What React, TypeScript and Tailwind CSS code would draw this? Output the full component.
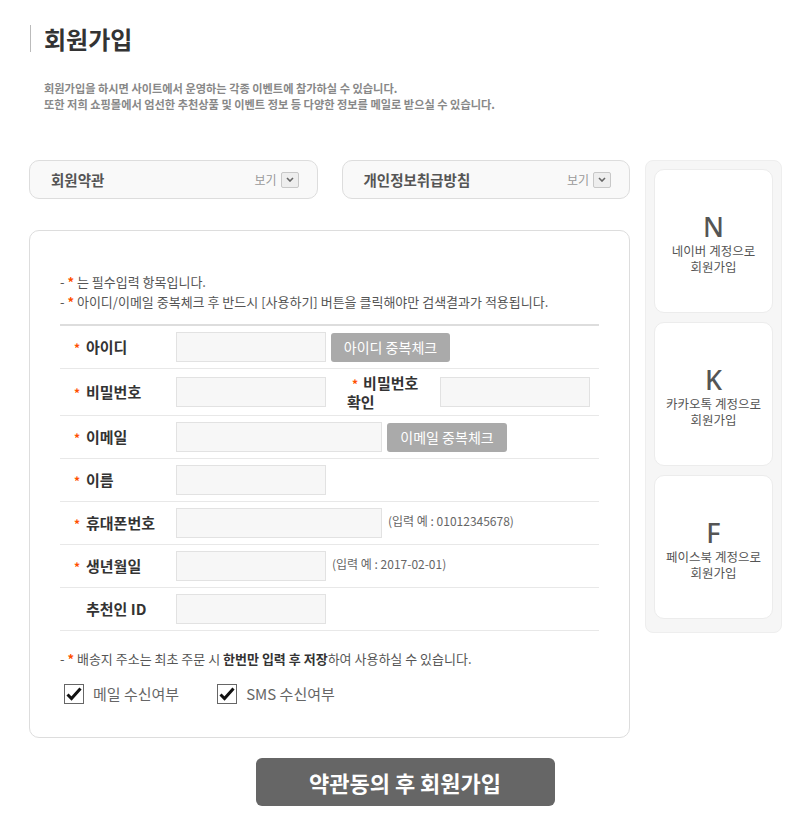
import { ReactNode } from 'react'

const FONT = "font-['Noto_Sans_CJK_KR','Noto_Sans',sans-serif]"

function Star() {
  return <span className="text-[#ff4e00] mr-[5px] text-[12px] font-bold">*</span>
}

function Chevron() {
  return (
    <span className="w-[18px] h-[16px] border border-[#c8c8c8] bg-[#eeeeee] rounded-[2px] flex items-center justify-center">
      <svg width="8" height="5" viewBox="0 0 8 5">
        <path d="M1 1 L4 4 L7 1" fill="none" stroke="#666" strokeWidth="1.6" />
      </svg>
    </span>
  )
}

function Accordion({ title }: { title: string }) {
  return (
    <div className="w-[289px] h-[39px] border border-[#dddddd] bg-[#f9f9f9] rounded-[10px] flex items-center pl-[21px] pr-[18px]">
      <span className="text-[14.5px] font-bold text-[#555]">{title}</span>
      <span className="ml-auto text-[12px] text-[#999] mr-[4px]">보기</span>
      <Chevron />
    </div>
  )
}

function Input({ w }: { w: string }) {
  return <div className={`${w} h-[30px] bg-[#f7f7f7] border border-[#e2e2e2]`} />
}

function CheckBtn({ label, w }: { label: string; w: string }) {
  return (
    <button className={`${w} h-[29px] bg-[#aaaaaa] text-white text-[14px] rounded-[3px] ml-[5px]`}>{label}</button>
  )
}

function Row({ label, required = true, children, tall = false }: { label: ReactNode; required?: boolean; children: ReactNode; tall?: boolean }) {
  return (
    <div className={`flex items-center border-b border-[#e8e8e8] ${tall ? 'h-[47px]' : 'h-[43px]'}`}>
      <div className="w-[116px] pl-[14px] flex items-center text-[15px] font-bold text-[#333]">
        <span className="w-[12px]">{required && <Star />}</span>
        {label}
      </div>
      {children}
    </div>
  )
}

function Hint({ text }: { text: string }) {
  return <span className="self-start mt-[10px] ml-[6px] text-[12px] text-[#666]">{text}</span>
}

function Checkbox({ label }: { label: string }) {
  return (
    <label className="flex items-center gap-[9px] text-[15px] text-[#666]">
      <span className="w-[20px] h-[20px] border border-[#666] bg-white flex items-center justify-center">
        <svg width="16" height="14" viewBox="0 0 16 14">
          <path d="M1.5 7.5 L5.5 11.5 L14.5 1.5" fill="none" stroke="#111" strokeWidth="3" />
        </svg>
      </span>
      {label}
    </label>
  )
}

function SocialCard({ letter, name }: { letter: string; name: string }) {
  return (
    <div className="h-[144px] bg-white border border-[#ececec] rounded-[10px] flex flex-col items-center justify-center pt-[4px]">
      <span className="text-[27px] leading-[30px] font-medium text-[#555] font-['Noto_Sans',sans-serif]">{letter}</span>
      <span className="mt-[1px] text-[12.5px] leading-[16px] text-[#555] text-center">{name} 계정으로<br />회원가입</span>
    </div>
  )
}

export default function App() {
  return (
    <div className={`${FONT} w-[806px] min-h-[820px] bg-white pl-[29px] pt-[25px]`}>
      <div className="ml-[1px] border-l border-[#bbb] h-[27px] flex items-center pl-[13px]">
        <h1 className="text-[24px] font-bold text-[#333] leading-none">회원가입</h1>
      </div>
      <div className="mt-[28px] pl-[15px] text-[11.2px] leading-[16px] font-bold text-[#888]">
        <p>회원가입을 하시면 사이트에서 운영하는 각종 이벤트에 참가하실 수 있습니다.</p>
        <p>또한 저희 쇼핑몰에서 엄선한 추천상품 및 이벤트 정보 등 다양한 정보를 메일로 받으실 수 있습니다.</p>
      </div>

      <div className="mt-[48px] flex gap-[15px]">
        <div className="w-[601px]">
          <div className="flex gap-[24px]">
            <Accordion title="회원약관" />
            <Accordion title="개인정보취급방침" />
          </div>

          <div className="mt-[31px] h-[508px] border border-[#dddddd] rounded-[10px] px-[30px] pt-[41px]">
            <div className="text-[13px] leading-[20px] text-[#555]">
              <p>- <span className="text-[#ff4e00] font-bold">*</span> 는 필수입력 항목입니다.</p>
              <p>- <span className="text-[#ff4e00] font-bold">*</span> 아이디/이메일 중복체크 후 반드시 [사용하기] 버튼을 클릭해야만 검색결과가 적용됩니다.</p>
            </div>
            <div className="mt-[12px] border-t-2 border-[#dddddd]">
              <Row label="아이디">
                <Input w="w-[150px]" />
                <CheckBtn label="아이디 중복체크" w="w-[119px]" />
              </Row>
              <Row label="비밀번호" tall>
                <Input w="w-[150px]" />
                <div className="w-[114px] pl-[21px] text-[15px] leading-[18px] font-bold text-[#333]">
                  <span className="pl-[5px]"><Star /></span>비밀번호<br />확인
                </div>
                <Input w="w-[150px]" />
              </Row>
              <Row label="이메일">
                <Input w="w-[206px]" />
                <CheckBtn label="이메일 중복체크" w="w-[120px]" />
              </Row>
              <Row label="이름">
                <Input w="w-[150px]" />
              </Row>
              <Row label="휴대폰번호">
                <Input w="w-[206px]" />
                <Hint text="(입력 예 : 01012345678)" />
              </Row>
              <Row label="생년월일">
                <Input w="w-[150px]" />
                <Hint text="(입력 예 : 2017-02-01)" />
              </Row>
              <Row label="추천인 ID" required={false}>
                <Input w="w-[150px]" />
              </Row>
            </div>
            <p className="mt-[19px] text-[13px] leading-[18px] text-[#555]">
              - <span className="text-[#ff4e00] font-bold">*</span> 배송지 주소는 최초 주문 시 <b className="text-[#333]">한번만 입력 후 저장</b>하여 사용하실 수 있습니다.
            </p>
            <div className="mt-[15px] pl-[4px] flex gap-[38px]">
              <Checkbox label="메일 수신여부" />
              <Checkbox label="SMS 수신여부" />
            </div>
          </div>
        </div>

        <div className="w-[137px] h-[473px] bg-[#f6f6f6] border border-[#eeeeee] rounded-[8px] p-[8px] flex flex-col gap-[9px]">
          <SocialCard letter="N" name="네이버" />
          <SocialCard letter="K" name="카카오톡" />
          <SocialCard letter="F" name="페이스북" />
        </div>
      </div>

      <div className="mt-[20px] w-[752px] flex justify-center">
        <button className="w-[299px] h-[48px] bg-[#666666] rounded-[6px] text-white text-[22px] font-bold">약관동의 후 회원가입</button>
      </div>
    </div>
  )
}
